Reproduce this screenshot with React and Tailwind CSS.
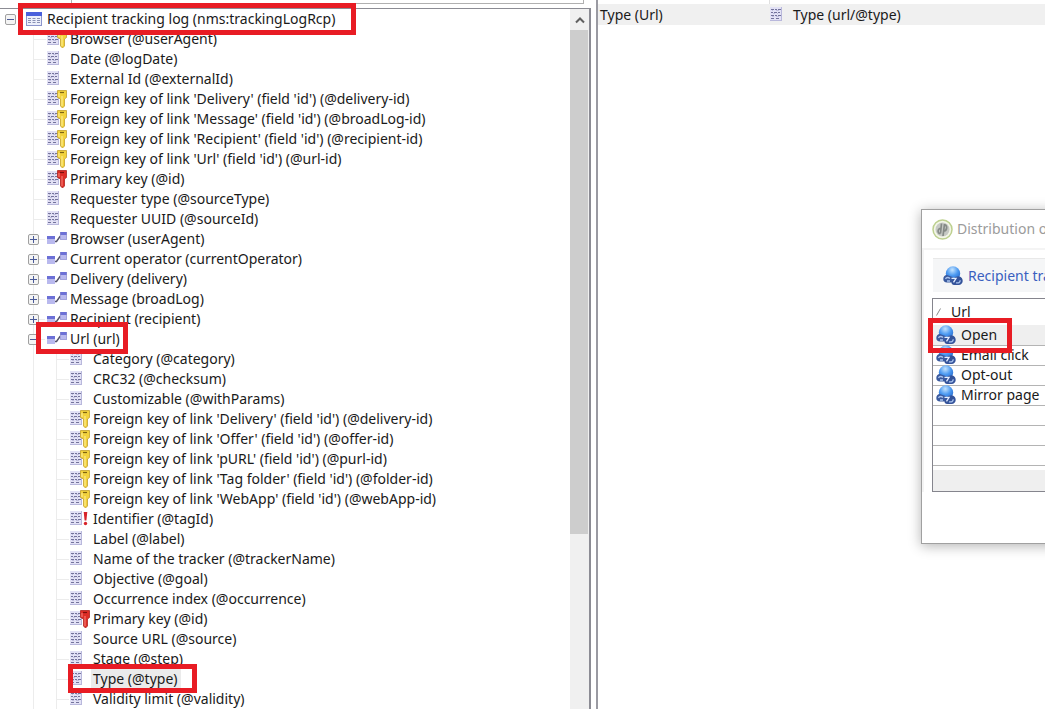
import React from 'react';

const fields = [
  { label: 'Browser (@userAgent)', mark: 'key' },
  { label: 'Date (@logDate)' },
  { label: 'External Id (@externalId)' },
  { label: "Foreign key of link 'Delivery' (field 'id') (@delivery-id)", mark: 'key' },
  { label: "Foreign key of link 'Message' (field 'id') (@broadLog-id)", mark: 'key' },
  { label: "Foreign key of link 'Recipient' (field 'id') (@recipient-id)", mark: 'key' },
  { label: "Foreign key of link 'Url' (field 'id') (@url-id)", mark: 'key' },
  { label: 'Primary key (@id)', mark: 'primary' },
  { label: 'Requester type (@sourceType)' },
  { label: 'Requester UUID (@sourceId)' },
]

const links = [
  'Browser (userAgent)',
  'Current operator (currentOperator)',
  'Delivery (delivery)',
  'Message (broadLog)',
  'Recipient (recipient)',
]

const urlFields = [
  { label: 'Category (@category)' },
  { label: 'CRC32 (@checksum)' },
  { label: 'Customizable (@withParams)' },
  { label: "Foreign key of link 'Delivery' (field 'id') (@delivery-id)", mark: 'key' },
  { label: "Foreign key of link 'Offer' (field 'id') (@offer-id)", mark: 'key' },
  { label: "Foreign key of link 'pURL' (field 'id') (@purl-id)", mark: 'key' },
  { label: "Foreign key of link 'Tag folder' (field 'id') (@folder-id)", mark: 'key' },
  { label: "Foreign key of link 'WebApp' (field 'id') (@webApp-id)", mark: 'key' },
  { label: 'Identifier (@tagId)', mark: 'required' },
  { label: 'Label (@label)' },
  { label: 'Name of the tracker (@trackerName)' },
  { label: 'Objective (@goal)' },
  { label: 'Occurrence index (@occurrence)' },
  { label: 'Primary key (@id)', mark: 'primary' },
  { label: 'Source URL (@source)' },
  { label: 'Stage (@step)' },
  { label: 'Type (@type)', selected: true },
  { label: 'Validity limit (@validity)' },
]

const urls = ['Open', 'Email click', 'Opt-out', 'Mirror page']

const FieldIcon = ({ mark }) => (
  <svg width="21" height="20" viewBox="0 0 21 20" className="shrink-0">
    <rect x="0" y="2" width="12" height="14" fill="#e2e1f5" />
    <path d="M11.500 2v14M0 15.500h12" stroke="#b9b8dc" />
    <path d="M1 4.500h3M5 4.500h2M8 4.500h3M1 7.500h2M4 7.500h3M8 7.500h2M1 10.500h3M5 10.500h2M8 10.500h3M1 13.500h3M6 13.500h3" stroke="#74739c" />
    <path d="M2 5.500h1M6 5.500h3M3 8.500h2M7 8.500h1M2 11.500h2M6 11.500h3" stroke="#c0bfdf" />
    {(mark === 'key' || mark === 'primary') && (
      <g>
        <path
          d="M10.500 1.500h9v7l-2 1.500v7l-2 2-2-2v-7l-3-1.500z"
          fill={mark === 'key' ? '#f2d23c' : '#de2d26'}
          stroke={mark === 'key' ? '#c3a02c' : '#ad2420'}
          strokeWidth="0.8"
        />
        <path d="M13 3.500h4" stroke={mark === 'key' ? '#7d6412' : '#7d0f0c'} strokeWidth="1.200" />
        <path d="M12 4v4M15 7v10" stroke={mark === 'key' ? '#fdf0a0' : '#f7877e'} />
      </g>
    )}
    {mark === 'required' && (
      <g fill="#d8242a">
        <path d="M13.700 3h3.600l-.9 8.500h-1.800z" />
        <circle cx="15.500" cy="14.500" r="1.700" />
      </g>
    )}
  </svg>
)

const LinkIcon = () => (
  <svg width="21" height="20" viewBox="0 0 21 20" className="shrink-0">
    <path d="M8 12.500h1.500l3.500-5h1" stroke="#55556c" strokeWidth="1.500" fill="none" />
    <rect x="0" y="7" width="8" height="8" fill="#b9b9ee" />
    <rect x="0" y="7" width="8" height="3" fill="#6c70d6" />
    <rect x="13" y="3" width="7" height="8" fill="#b9b9ee" />
    <rect x="13" y="3" width="7" height="3" fill="#6c70d6" />
    <path d="M13.500 3v7.500h6V3" stroke="#9292cc" strokeWidth="0.600" fill="none" />
  </svg>
)

const TableIcon = () => (
  <svg width="16" height="20" viewBox="0 0 16 20" className="shrink-0">
    <rect x="0.500" y="3.500" width="15" height="13" fill="#eceffb" stroke="#8c95cc" />
    <rect x="0" y="3" width="16" height="4" fill="#4a60dc" />
    <path d="M2 9.500h3M6.500 9.500h3M11 9.500h3M2 11.500h3M6.500 11.500h3M11 11.500h3M2 13.500h3M6.500 13.500h3M11 13.500h3" stroke="#8a91b4" />
  </svg>
)

const UrlIcon = () => (
  <svg width="20" height="20" viewBox="0 0 20 20" className="shrink-0">
    <defs>
      <radialGradient id="globe" cx="0.45" cy="0.25" r="0.8">
        <stop offset="0" stopColor="#c4e4ff" />
        <stop offset="0.5" stopColor="#4a98f0" />
        <stop offset="1" stopColor="#2260c4" />
      </radialGradient>
    </defs>
    <circle cx="10" cy="7.500" r="7.200" fill="url(#globe)" />
    <path d="M4 9C1.500 9 .3 10.800.3 13S1.500 16.500 4 16.500h6l2-2L9.500 11z" fill="#3a5a9e" />
    <path d="M12 11l4-.8c2.500.8 3.700 2.500 3.700 4.800S18 19 15.500 19H11c-1.500 0-2.500-1-2.500-2.500z" fill="#34539a" />
    <path d="M2.500 13c.8-2 3-1.800 4.500-.5M13 16.800c2.500.5 4.200-.3 4.200-2.500M4 15h3" stroke="#a9c3ee" strokeWidth="1.300" fill="none" />
    <path d="M8.500 12.300h4.500l-2.500 4" stroke="#e4eeff" strokeWidth="1.300" fill="none" />
  </svg>
)

const Expander = ({ open }) => (
  <button
    type="button"
    aria-label={open ? 'Collapse' : 'Expand'}
    className="flex h-[11px] w-[11px] shrink-0 items-center justify-center rounded-xs border border-[#a0a0a0] bg-[#f4f4f4]">
    <svg width="7" height="7" viewBox="0 0 7 7">
      <path d={open ? 'M0 3.500h7' : 'M0 3.500h7M3.500 0v7'} stroke="#4a5a98" />
    </svg>
  </button>
)

const FieldRow = ({ item }) => (
  <li className="flex h-5 items-center">
    <span className="h-px w-3 shrink-0 bg-[#ececec]"></span>
    <span className="ml-px flex">
      <FieldIcon mark={item.mark} />
    </span>
    <span className={`px-0.5 whitespace-nowrap ${item.selected ? 'bg-[#ebebeb] pr-1' : ''}`}>{item.label}</span>
  </li>
)

const LinkRow = ({ label, open }) => (
  <div className="-ml-1.5 flex h-5 items-center">
    <Expander open={open} />
    <span className="mr-0.5 h-px w-1.5 shrink-0 bg-[#ececec]"></span>
    <LinkIcon />
    <span className="px-0.5 whitespace-nowrap">{label}</span>
  </div>
)

const SchemaTree = () => (
  <div className="flex min-h-0 flex-1 border-t border-r-2 border-[#8c8c94]">
    <div className="min-w-0 flex-1 overflow-hidden pl-[5px]">
      <div className="flex h-5 items-center">
        <Expander open />
        <span className="ml-2.5 flex">
          <TableIcon />
        </span>
        <span className="ml-[5px] whitespace-nowrap">Recipient tracking log (nms:trackingLogRcp)</span>
      </div>
      <ul className="ml-7 border-l border-[#ececec]">
        {fields.map((item, index) => (
          <FieldRow item={item} key={index} />
        ))}
        {links.map((label, index) => (
          <li key={index}>
            <LinkRow label={label} />
          </li>
        ))}
        <li>
          <LinkRow label="Url (url)" open />
          <ul className="ml-[22px] border-l border-[#ececec]">
            {urlFields.map((item, index) => (
              <FieldRow item={item} key={index} />
            ))}
          </ul>
        </li>
      </ul>
    </div>
    <div className="flex w-[19px] shrink-0 flex-col bg-[#f0f0f0]">
      <button type="button" aria-label="Scroll up" className="flex h-[21px] items-center justify-center">
        <svg width="10" height="8" viewBox="0 0 10 8">
          <path d="M1 6.500l4-4 4 4" stroke="#606060" strokeWidth="2" fill="none" />
        </svg>
      </button>
      <div className="mr-px h-[504px] bg-[#cdcdcd]"></div>
    </div>
  </div>
)

const DistributionDialog = () => (
  <div role="dialog" aria-labelledby="dialog-title" className="absolute top-[209px] left-[921px] h-[335px] w-[480px] border border-[#a0a0a0] bg-white shadow-[0_2px_12px_rgba(0,0,0,0.3)]">
    <div className="flex h-[38px] items-center gap-1 pl-2.5">
      <svg width="21" height="21" viewBox="0 0 21 21" className="shrink-0">
        <circle cx="10.500" cy="10.500" r="9.500" fill="#f3f6e8" stroke="#bdd08f" strokeWidth="1.500" />
        <circle cx="10.500" cy="10.500" r="7" fill="#c6c9c4" />
        <path d="M9.500 4.500L8.500 14.500M8.800 9.500c-3-.5-4 5-.3 5M12.500 5l-1.500 12M12.300 6c3.500-.5 3 6-.7 6" stroke="#858a86" strokeWidth="1.700" fill="none" />
      </svg>
      <h2 id="dialog-title" className="whitespace-nowrap text-[#9b9b9b]">Distribution of values</h2>
    </div>
    <div className="border-t-2 border-l-2 border-[#f4f4f4] pt-2 pl-[9px]">
      <div className="flex h-[34px] items-center gap-[5px] border-t border-[#e8e8e8] bg-[#f5f6f7] pl-2.5 whitespace-nowrap text-[#3a5fc0]">
        <UrlIcon />
        Recipient tracking log
      </div>
      <div className="-ml-px mt-1.5 border border-[#85858d]">
        <table className="w-full border-collapse text-left">
          <thead>
            <tr className="h-[26px]">
              <th className="p-0 font-normal">
                <span className="flex items-center gap-2.5 pl-[3px]">
                  <svg width="5" height="8" viewBox="0 0 5 8">
                    <path d="M0.500 7.500l4-7" stroke="#8a8a8a" />
                  </svg>
                  Url
                </span>
              </th>
            </tr>
          </thead>
          <tbody>
            {urls.map((url, index) => (
              <tr key={url} className={`h-5 border-b border-[#b4b4b4] ${index === 0 ? 'bg-[#efefef]' : ''}`}>
                <td className="p-0">
                  <span className="flex h-[19px] items-center gap-[5px] pl-[3px]">
                    <UrlIcon />
                    {url}
                  </span>
                </td>
              </tr>
            ))}
            {[0, 1, 2].map((row) => (
              <tr key={row} className="h-5 border-b border-[#b4b4b4]">
                <td className="p-0"></td>
              </tr>
            ))}
          </tbody>
        </table>
        <div className="mt-1 h-[21px] bg-[#efefef]"></div>
      </div>
    </div>
  </div>
)

const App = () => {
  return (
    <div className="relative flex h-screen overflow-hidden bg-white font-['Noto_Sans',sans-serif] text-sm leading-5 text-[#1a1a1a]">
      <div className="flex w-[591px] shrink-0 flex-col">
        <div className="mr-[7px] mb-1 ml-[71px] h-1 shrink-0 border-x border-b border-[#b0b0b0]"></div>
        <SchemaTree />
      </div>

      <div className="ml-[5px] min-w-0 flex-1 border-l-2 border-[#9a9aa2]">
        <div className="ml-[171px] h-1 border-l border-[#e0e0e0]"></div>
        <div className="flex h-[21px] items-center bg-[#f0f0f0] pl-0.5">
          <span className="w-[170px] shrink-0">Type (Url)</span>
          <FieldIcon />
          <span className="ml-0.5">Type (url/@type)</span>
        </div>
      </div>

      <DistributionDialog />

      {/* highlighted steps */}
      <div className="absolute top-[3px] left-[18px] h-8 w-[338px] border-5 border-[#e81c24]"></div>
      <div className="absolute top-[322px] left-9 h-8 w-[92px] border-5 border-[#e81c24]"></div>
      <div className="absolute top-[664px] left-[68px] h-[29px] w-[129px] border-5 border-[#e81c24]"></div>
      <div className="absolute top-[318px] left-[928px] h-[35px] w-[84px] border-5 border-[#e81c24]"></div>
    </div>
  );
};

export default App;
